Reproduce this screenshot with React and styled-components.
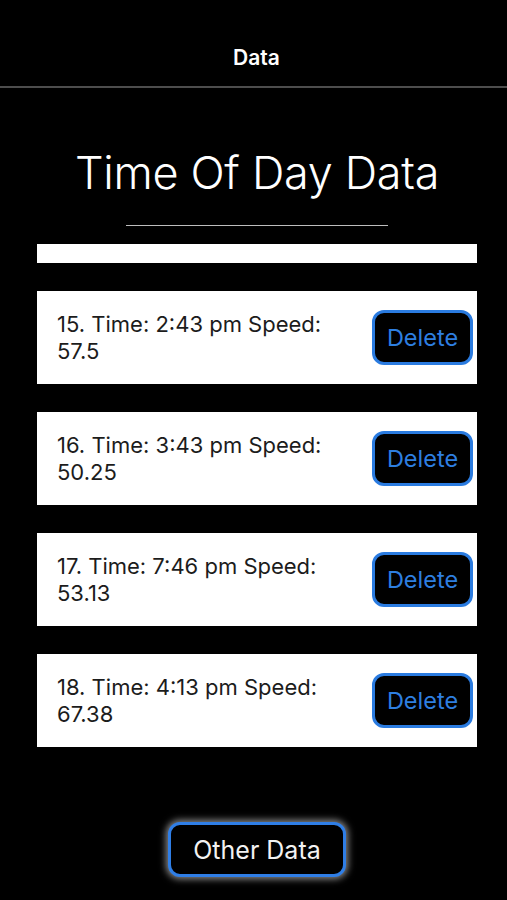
import React from 'react';
import styled, { createGlobalStyle } from 'styled-components';

const GlobalStyle = createGlobalStyle`
  body {
    margin: 0;
    background: #000;
    font-family: Inter, "Open Sans", "Liberation Sans", sans-serif;
  }
`;

const Page = styled.div`
  width: 507px;
  height: 900px;
  background: #000;
  display: flex;
  flex-direction: column;
`;

const NavBar = styled.header`
  height: 88px;
  border-bottom: 2px solid #4d4d4d;
  display: flex;
  align-items: center;
  justify-content: center;
  padding: 28px 0 0 6px;
  color: #fff;
  font-size: 21px;
  font-weight: 600;
  box-sizing: border-box;
`;

const Main = styled.main`
  flex: 1;
  display: flex;
  flex-direction: column;
  align-items: center;
  padding: 0 30px 0 37px;
`;

const Title = styled.h1`
  margin: 59px 0 0;
  color: #fff;
  font-size: 45px;
  font-weight: 300;
  line-height: 52px;
  letter-spacing: -0.3px;
`;

const Rule = styled.div`
  width: 262px;
  height: 1px;
  background: #bdbdbd;
  margin-top: 26px;
`;

const List = styled.div`
  width: 440px;
  display: flex;
  flex-direction: column;
  gap: 28px;
  margin-top: 18px;
`;

const Stub = styled.div`
  height: 19px;
  background: #fff;
`;

const Card = styled.div`
  height: 93px;
  background: #fff;
  display: flex;
  align-items: center;
  justify-content: space-between;
  padding: 0 4px 0 20px;
  box-sizing: border-box;
`;

const Entry = styled.div`
  width: 290px;
  color: #1c1c1c;
  font-size: 22px;
  line-height: 27px;
`;

const Button = styled.button`
  background: #000;
  border: 3px solid ${p => p.$glow ? '#2f7ee6' : '#2a7be0'};
  border-radius: 12px;
  font-family: inherit;
  cursor: pointer;
  box-sizing: border-box;
`;

const DeleteButton = styled(Button)`
  width: 101px;
  height: 55px;
  color: #2e7fe0;
  font-size: 23.5px;
  padding: 0;
`;

const OtherButton = styled(Button)`
  width: 178px;
  height: 55px;
  margin-top: 75px;
  color: #f2f2f2;
  font-size: 25px;
  padding: 0;
  box-shadow: 0 0 7px 2px rgba(255, 255, 255, 0.55);
`;

const entries = [
  { n: 15, time: '2:43 pm', speed: '57.5' },
  { n: 16, time: '3:43 pm', speed: '50.25' },
  { n: 17, time: '7:46 pm', speed: '53.13' },
  { n: 18, time: '4:13 pm', speed: '67.38' },
];

export default function App() {
  return (
    <Page>
      <GlobalStyle />
      <NavBar>Data</NavBar>
      <Main>
        <Title>Time Of Day Data</Title>
        <Rule />
        <List>
          <Stub />
          {entries.map(e => (
            <Card key={e.n}>
              <Entry>{e.n}. Time: {e.time} Speed: {e.speed}</Entry>
              <DeleteButton>Delete</DeleteButton>
            </Card>
          ))}
        </List>
        <OtherButton $glow>Other Data</OtherButton>
      </Main>
    </Page>
  );
}
